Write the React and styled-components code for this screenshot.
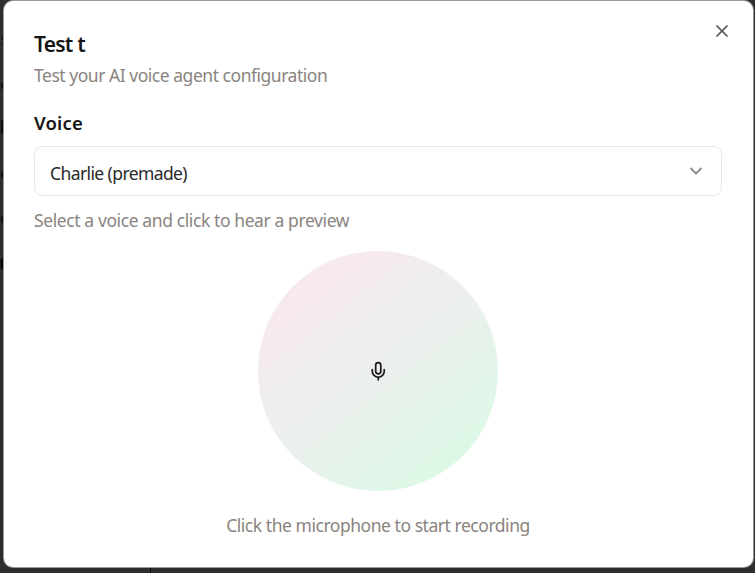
import React from "react";
import styled, { createGlobalStyle } from "styled-components";
import { ChevronDown, Mic, X } from "lucide-react";

const GlobalStyle = createGlobalStyle`
  * { box-sizing: border-box; }
  html, body { margin: 0; padding: 0; overflow: hidden; }
  body { background: #2e2e2e; font-family: "Noto Sans", "Open Sans", sans-serif; }
  h2, p { margin: 0; }
  button { font: inherit; color: inherit; border: 0; background: none; padding: 0; }
`;

const Backdrop = styled.div`
  position: relative;
  width: 755px;
  height: 573px;
  padding: 1px 2px 6px 4px;
  background: linear-gradient(#0b0b0b, #0b0b0b) 150px 0 / 1px 100% no-repeat, #2e2e2e;
`;

const PageLetter = styled.span`
  position: absolute;
  left: ${(p) => p.$left}px;
  top: ${(p) => p.$top}px;
  font-size: 17px;
  line-height: 20px;
  font-weight: ${(p) => (p.$bold ? 700 : 400)};
  color: #080808;
`;

const Dialog = styled.section`
  position: relative;
  height: 566px;
  padding: 27px 31px 0 30px;
  border-radius: 9px;
  background: #fff;
  box-shadow: 0 0 0 1px #9a9a9a;
  display: flex;
  flex-direction: column;
`;

const Title = styled.h2`
  height: 32px;
  font-size: 21px;
  line-height: 32px;
  font-weight: 600;
  letter-spacing: ${(p) => p.$track}px;
  color: #141414;
`;

const Muted = styled.p`
  height: 24px;
  margin-top: ${(p) => p.$gap}px;
  align-self: ${(p) => (p.$center ? "center" : "flex-start")};
  font-size: 17.5px;
  line-height: 24px;
  letter-spacing: ${(p) => p.$track}px;
  white-space: nowrap;
  color: #8a8480;
`;

const Label = styled.label`
  height: 26px;
  margin-top: 23px;
  font-size: 18.5px;
  line-height: 26px;
  font-weight: 600;
  letter-spacing: ${(p) => p.$track}px;
  color: #141414;
`;

const Select = styled.button`
  display: flex;
  flex: none;
  align-items: center;
  justify-content: space-between;
  width: 688px;
  height: 50px;
  margin-top: 10px;
  padding: 0 15px;
  border: 1px solid #e9e8e7;
  border-radius: 8px;
`;

const Value = styled.span`
  padding-top: 3px;
  font-size: 17.5px;
  line-height: 24px;
  letter-spacing: ${(p) => p.$track}px;
  color: #2a2a2a;
`;

const Chevron = styled(ChevronDown)`
  color: #8a8a8a;
`;

const Orb = styled.button`
  display: flex;
  flex: none;
  align-items: center;
  justify-content: center;
  align-self: center;
  width: 240px;
  height: 240px;
  margin-top: 19px;
  border-radius: 50%;
  background: linear-gradient(142deg, #fae7f1 0%, #f7e9f0 20%, #efeeee 38%, #ebf0ec 52%, #e2f6ea 74%, #ddf9e6 87%, #dcfce7 100%);
  color: #1a1a1a;
`;

const Close = styled.button`
  position: absolute;
  top: 20px;
  right: 21px;
  width: 20px;
  height: 20px;
  color: #525252;
  svg { display: block; }
`;

const pageLetters = [
  { char: "s", top: 29, left: 1 },
  { char: "o", top: 74, left: 0 },
  { char: "l", top: 118, left: 0, bold: true },
  { char: "o", top: 163, left: 0 },
  { char: "o", top: 208, left: 0 },
  { char: "t", top: 254, left: -1, bold: true },
];

export default function App() {
  return (
    <>
      <GlobalStyle />
      <Backdrop>
        {pageLetters.map((l) => (
          <PageLetter key={l.top} $top={l.top} $left={l.left} $bold={l.bold} aria-hidden="true">{l.char}</PageLetter>
        ))}
        <Dialog role="dialog">
          <Title $track={-0.75}>Test t</Title>
          <Muted $gap={3} $track={-0.47}>Test your AI voice agent configuration</Muted>
          <Label $track={0.2}>Voice</Label>
          <Select type="button">
            <Value $track={-0.6}>Charlie (premade)</Value>
            <Chevron size={20} strokeWidth={2.2} />
          </Select>
          <Muted $gap={12} $track={-0.4}>Select a voice and click to hear a preview</Muted>
          <Orb type="button" aria-label="Record"><Mic size={20.5} /></Orb>
          <Muted $gap={22} $center $track={-0.46}>Click the microphone to start recording</Muted>
          <Close type="button" aria-label="Close"><X size={20} strokeWidth={2.1} /></Close>
        </Dialog>
      </Backdrop>
    </>
  );
}
